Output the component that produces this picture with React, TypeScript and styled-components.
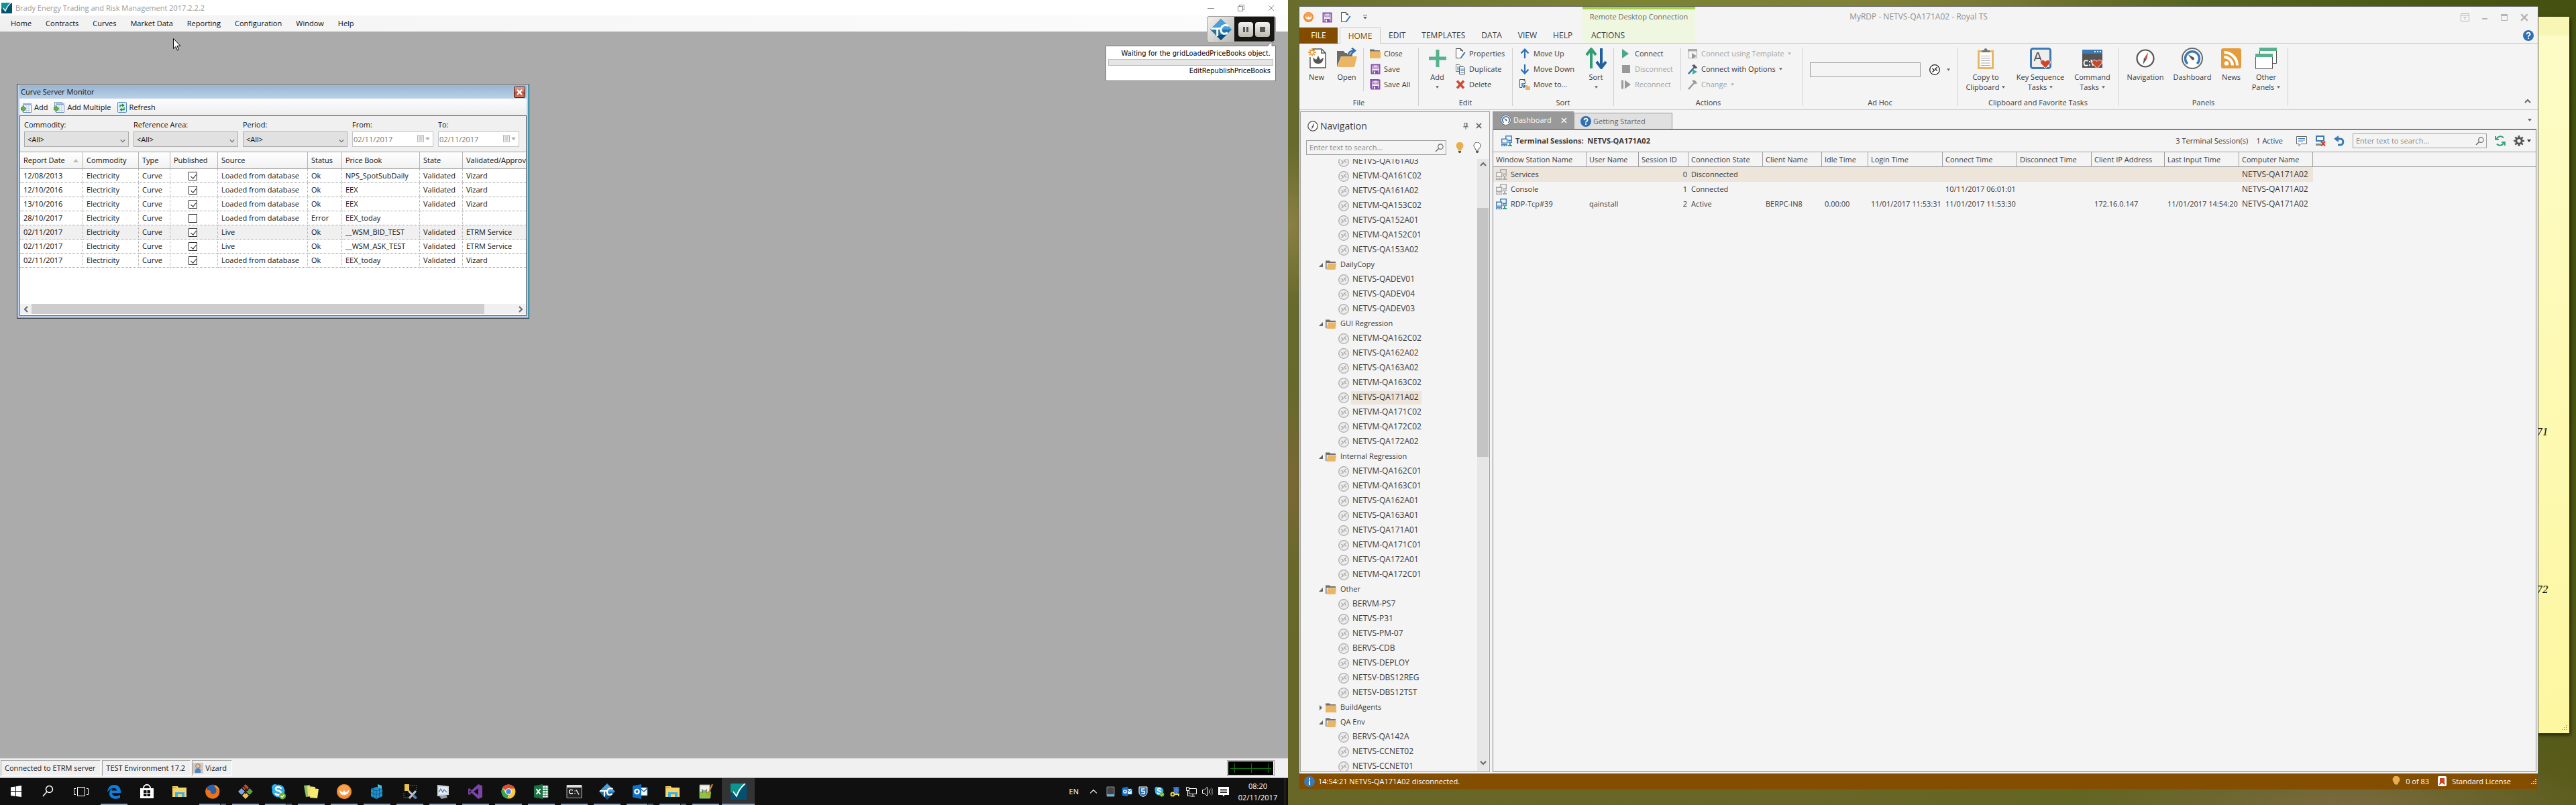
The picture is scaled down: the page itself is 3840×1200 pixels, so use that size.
import React from 'react';
import styled, { createGlobalStyle, css } from 'styled-components';

const UI = '"Open Sans", "Noto Sans", "Liberation Sans", sans-serif';

const Global = createGlobalStyle`
  * { box-sizing: border-box; }
  html, body { margin: 0; padding: 0; }
  body { font: 11px/16px ${UI}; color: #111; background: #101010; }
  button, input, select { font: inherit; color: inherit; margin: 0; }
  button { background: none; border: 0; padding: 0; white-space: nowrap; }
  svg { display: block; flex: none; }
  ul { list-style: none; margin: 0; padding: 0; }
`;

/* ------------------------------------------------------------------ */
/* Icons                                                               */
/* ------------------------------------------------------------------ */

const Svg = ({ s = 16, w, h, box, children }: any) => (
  <svg width={w || s} height={h || s} viewBox={box || `0 0 ${w || s} ${h || s}`} fill="none" aria-hidden="true">{children}</svg>
);

const BradyIcon = ({ s = 16 }: any) => (
  <Svg s={s} box="0 0 16 16">
    <rect width="16" height="16" rx="1" fill="#04506f" />
    <path d="M0 1a1 1 0 0 1 1-1h13C10.500 3.500 8 8 6.200 12.500L2 8 0 9z" fill="#0b9490" />
    <path d="M2.500 8l3.500 4.500C7.500 8 10.500 3.500 14.500 0" stroke="#fff" strokeWidth="1.300" />
  </Svg>
);
const RoyalIcon = ({ s = 15 }: any) => (
  <Svg s={s} box="0 0 16 16">
    <circle cx="8" cy="8" r="8" fill="#f08c2b" />
    <circle cx="8" cy="7" r="6.300" fill="#f6a050" />
    <path d="M3 6.500l3.300 2.500L8 6.500 9.700 9l3.800-3C13 10 11 11.500 8 11.500S3.500 10 3 6.500z" fill="#fff" />
  </Svg>
);
const SaveIcon = ({ all }: { all?: boolean }) => (
  <Svg>
    {all && <path d="M.5 13.500v-13h13" stroke="#8b4fae" />}
    <rect x="2.500" y="1.500" width="12" height="13" stroke="#8b4fae" strokeWidth="2" />
    <path d="M5 2h7v5H5z" fill="#fff" stroke="#8b4fae" />
    <path d="M4.500 10h8v5h-8z" fill="#8b4fae" />
    <path d="M6 11.500h2v3H6z" fill="#fff" />
    <path d="M6 4h5M6 5.500h5" stroke="#999" strokeWidth=".7" />
  </Svg>
);
const EditDocIcon = () => (
  <Svg>
    <path d="M11.500 5.500v-2l-3-3h-7v14h8" stroke="#4a4a4a" fill="#fff" />
    <path d="M8.500.5v3h3" stroke="#4a4a4a" />
    <path d="M14 5.500L8.500 13l-1 2.500L10 14l5.500-7.500z" fill="#2f6fb3" />
  </Svg>
);
const NewIcon = () => (
  <Svg w={28} h={32}>
    <path d="M8 6V2h13l6 6v22H4V14" stroke="#555" strokeWidth="1.500" fill="#fff" />
    <path d="M21 2v6h6" stroke="#555" strokeWidth="1.500" />
    <path d="M8 15l5 3 3-6 3 6 5-3c-1 6-3 9-8 9s-7-3-8-9z" fill="#555" />
    <path d="M7 1v12M1 7h12M3 3l8 8M11 3l-8 8" stroke="#e39b3b" strokeWidth="1.800" />
    <circle cx="7" cy="7" r="2.500" fill="#fff" stroke="#e39b3b" />
  </Svg>
);
const OpenBigIcon = () => (
  <Svg w={32} h={32}>
    <path d="M1 29V5h10l2 3h11v5H7z" fill="#6b6b6b" />
    <path d="M7 13h24l-4 16H2z" fill="#eab665" />
    <path d="M18 10c1-4 3-6 8-6" stroke="#f4f4f4" strokeWidth="5" />
    <path d="M18 10c1-4 4-5.500 9-5.500M23 .5l5 4-5 4" stroke="#2f6fb3" strokeWidth="2.500" />
  </Svg>
);
const FolderIcon = ({ open }: { open?: boolean }) => (
  <Svg>
    <path d="M0 15V1.500h6L7.500 3H15v2H0z" fill="#6f6f6f" />
    {open
      ? <><path d="M1 5h14v2H1z" fill="#f4f4f4" /><path d="M0 2h1.500v12H0z" fill="#6f6f6f" /><path d="M3.500 5.500H16L14.500 15H1.500z" fill="#eab665" /></>
      : <path d="M0 4.500h16V15H0z" fill="#eab665" />}
  </Svg>
);
const PlusBig = () => <Svg w={28} h={28}><path d="M14 1v26M1 14h26" stroke="#57b18b" strokeWidth="5" /></Svg>;
const DuplicateIcon = () => (
  <Svg>
    <path d="M1.500 1.500h5l2 2v8h-7z" fill="#fff" stroke="#777" />
    <path d="M3 5h3M3 7h3M3 9h3" stroke="#4a7fb5" />
    <path d="M6.500 4.500h6l2 2v9h-8z" fill="#fff" stroke="#555" />
    <path d="M8 8h5M8 10.500h5M8 13h5" stroke="#2f6fb3" />
  </Svg>
);
const DeleteIcon = () => <Svg><path d="M3 2.500l10 11M13 2.500L3 13.500" stroke="#d24a33" strokeWidth="3.500" /></Svg>;
const ArrowV = ({ down }: { down?: boolean }) => (
  <Svg><path d={down ? 'M8 1v12M2.500 8.500L8 14.500l5.500-6' : 'M8 15V3M2.500 7.500L8 1.500l5.500 6'} stroke="#2f6fb3" strokeWidth="2.200" /></Svg>
);
const MoveToIcon = () => (
  <Svg>
    <path d="M8 3.500v-3H.5v12H4M5.500.5l3 3v3h-3" stroke="#555" />
    <path d="M4 6v4.500h4M6 8l2.500 2.500L6 13" stroke="#2f6fb3" strokeWidth="1.500" />
    <path d="M9 9h3l1 1.500h3V16H9z" fill="#eab665" />
  </Svg>
);
const SortBig = () => (
  <Svg w={32} h={32}>
    <path d="M9 31V4M2 11l7-9 7 9" stroke="#2f9e72" strokeWidth="4" />
    <path d="M24 1v27M17 21l7 9 7-9" stroke="#225f9f" strokeWidth="4" />
  </Svg>
);
const PlayIcon = () => <Svg><path d="M2 1l10 7-10 7z" fill="#4aa884" /></Svg>;
const StopIcon = () => <Svg><path d="M2 2h12v12H2z" fill="#999" /></Svg>;
const ReconnectIcon = () => <Svg><path d="M1 1.500h3v13H1zM6 1.500L15 8l-9 6.500z" fill="#999" /></Svg>;
const TemplateIcon = () => (
  <Svg><path d="M14.500 14.500H1.500v-13h13z" stroke="#aaa" /><path d="M1 1h14v3.500H1z" fill="#aaa" /><path d="M7 7l7 4.500L7 16z" fill="#999" /></Svg>
);
const HammerIcon = ({ on }: { on?: boolean }) => (
  <Svg>
    <path d="M2 15L11 5" stroke={on ? '#2f6fb3' : '#999'} strokeWidth="2.500" />
    <path d="M7 2.500L10.500 1 15 5.500l-2 2-3-2.500z" fill={on ? '#555' : '#999'} />
    {on && <path d="M8 8l7 4-7 4z" fill="#4aa884" />}
  </Svg>
);
const RdpIcon = ({ c = '#aaa', f = 'none' }: any) => (
  <Svg>
    <circle cx="8" cy="8" r="7.300" stroke={c} strokeWidth="1.300" fill={f} />
    <path d="M4.500 6l3 2.700-3 2.700M11.800 4.200l-3 2.600 3 2.700" stroke={c} strokeWidth="1.400" />
  </Svg>
);
const ClipIcon = () => (
  <Svg w={24} h={32}>
    <path d="M1.500 5.500h21v25h-21z" fill="#fff" stroke="#eab665" strokeWidth="3" />
    <path d="M6 7V4h3.500c0-4 5-4 5 0H18v3z" fill="#777" />
    <path d="M5 12.500h14M5 16h14M5 19.500h14M5 23h14M5 26.500h14" stroke="#aaa" />
  </Svg>
);
const heart = 'M23 31l-7-7.500c-2-5 4-7 7-3 3-4 9-2 7 3z';
const KeySeqIcon = () => (
  <Svg w={32} h={32}>
    <rect x="1.500" y="1.500" width="29" height="29" rx="3" fill="#eee" stroke="#3b79b7" strokeWidth="3" />
    <path d="M6.500 20l4.500-12h1.500L17 20M8 16h7.500" stroke="#555" strokeWidth="1.800" />
    <path d={heart} fill="#cf4528" stroke="#fff" />
  </Svg>
);
const CmdTaskIcon = () => (
  <Svg w={30} h={30}>
    <path d="M0 2h30v27H0z" fill="#555" /><path d="M0 2h30v6H0z" fill="#3b79b7" />
    <path d="M18 4h2v2h-2zM22 4h2v2h-2zM26 4h2v2h-2z" fill="#fff" />
    <path d="M8.500 19c-4-2-6 0-6 3s2 5 6 3M11 19v2M11 24v2M13 17l3 9" stroke="#fff" strokeWidth="1.800" />
    <path d={heart} fill="#cf4528" stroke="#fff" transform="translate(-1 -1)" />
  </Svg>
);
const CompassIcon = ({ s = 28 }: any) => (
  <Svg s={s} box="0 0 28 28">
    <circle cx="14" cy="14" r="12.500" stroke="#555" strokeWidth="2.200" fill="#fff" />
    <path d="M18 5l-1.500 10-4-1.500z" fill="#d24a33" /><path d="M10.500 23l1.500-9.500 4 1.500z" fill="#555" />
  </Svg>
);
const GaugeIcon = ({ s = 32 }: any) => (
  <Svg s={s} box="0 0 32 32">
    <circle cx="16" cy="16" r="15" stroke="#666" strokeWidth="2" fill="#fff" />
    <path d="M9 24a10.500 10.500 0 1 1 14 0" stroke="#3b79b7" strokeWidth="3.500" />
    <path d="M9.500 10L18 14.500a2.200 2.200 0 1 1-3 3z" fill="#555" />
  </Svg>
);
const NewsIcon = () => (
  <Svg w={30} h={30}>
    <rect width="30" height="30" rx="3" fill="#e39b3b" />
    <circle cx="8" cy="22.500" r="3.200" fill="#fff" />
    <path d="M4.500 13A12.500 12.500 0 0 1 17 25.500M4.500 6A19.500 19.500 0 0 1 24 25.500" stroke="#fff" strokeWidth="4" />
  </Svg>
);
const PanelsIcon = () => (
  <Svg w={32} h={32}>
    <path d="M6.500.5h25v23h-25z" fill="#fff" stroke="#555" /><path d="M6 0h26v5H6z" fill="#57b18b" />
    <path d="M.5 9.500h25v22H.5z" fill="#fff" stroke="#555" /><path d="M0 9h26v5H0z" fill="#57b18b" />
  </Svg>
);
const Caret = ({ c = '#666', s = 5 }: any) => <Svg w={s} h={4} box="0 0 6 4"><path d="M0 0h6L3 4z" fill={c} /></Svg>;
const QuickCaret = () => <Svg w={6} h={7}><path d="M0 .5h6" stroke="#666" /><path d="M0 3h6L3 6.500z" fill="#666" /></Svg>;
const HelpIcon = ({ s = 16 }: any) => (
  <Svg s={s} box="0 0 16 16">
    <circle cx="8" cy="8" r="8" fill="#2f6fb3" />
    <path d="M5.500 6.200c0-3.600 5.200-3.300 5 0 0 1.600-2.500 1.700-2.500 3.600M8 11v2" stroke="#fff" strokeWidth="1.900" />
  </Svg>
);
const InfoIcon = () => (
  <Svg><circle cx="8" cy="8" r="8" fill="#3b79b7" /><path d="M8 3v2.200M8 6.500V13" stroke="#fff" strokeWidth="2" /></Svg>
);
const MagIcon = ({ s = 13, c = '#666' }: any) => (
  <Svg s={s} box="0 0 14 14"><circle cx="9" cy="5" r="4" stroke={c} strokeWidth="1.200" /><path d="M6 8l-5 5" stroke={c} strokeWidth="1.500" /></Svg>
);
const BulbIcon = ({ lit }: { lit?: boolean }) => (
  <Svg w={12} h={16}>
    <path d="M4 12c0-3-3-3.500-3-7a5 5 0 0 1 10 0c0 3.500-3 4-3 7z" fill={lit ? '#eaae50' : '#fff'} stroke={lit ? '#eaae50' : '#555'} />
    <path d="M4 13h4v1.500L7 16H5l-1-1.500z" fill="#555" />
  </Svg>
);
const TermIcon = ({ on }: { on?: boolean }) => {
  const c = on ? '#3f80c0' : '#aaa';
  return (
    <Svg>
      <path d="M6.700 5V.7h8.600v6.600H10" stroke={c} strokeWidth="1.400" />
      <path d="M.7 5.200h8v6h-8z" stroke={c} strokeWidth="1.400" fill="#f4f4f4" />
      <path d="M0 13h9v3H0zM10.500 8.500H16V11h-5.500z" fill={c} />
      <path d="M1.500 14.500H4M5.500 14.500h2M12 9.700h2.500" stroke="#f4f4f4" />
      <path d="M13 11v3M10 15h6" stroke={on ? '#3f9c78' : '#aaa'} strokeWidth="2" />
    </Svg>
  );
};
const NoteIcon = () => (
  <Svg><path d="M.5 1.500h15v11H7l-3 3v-3H.5z" stroke="#666" fill="#fff" /><path d="M3 4.500h10M3 7h10M3 9.500h7" stroke="#3b79b7" /></Svg>
);
const KillIcon = () => (
  <Svg>
    <path d="M2 1h11v7H2z" stroke="#3b79b7" strokeWidth="2" /><path d="M1 12h8v3H1z" fill="#888" />
    <path d="M9 9l6 6.500M15 9l-6 6.500" stroke="#cf3a22" strokeWidth="2.200" />
  </Svg>
);
const UndoIcon = () => <Svg><path d="M2 5h8c5 0 5 9 0 9H6" stroke="#3b79b7" strokeWidth="3" /><path d="M7 0v10L0 5z" fill="#3b79b7" /></Svg>;
const RefreshIcon = () => (
  <Svg>
    <path d="M2.500 6a6 6 0 0 1 10.500-2.500M13.500 10a6 6 0 0 1-10.500 2.500" stroke="#3aa57a" strokeWidth="2.200" />
    <path d="M0 1h2v4h4v2H0zM16 15h-2v-4h-4V9h6z" fill="#3aa57a" />
  </Svg>
);
const GearIcon = () => (
  <Svg>
    <circle cx="8" cy="8" r="4.200" stroke="#555" strokeWidth="3" />
    <path d="M8 0v3M8 13v3M0 8h3M13 8h3M2.300 2.300l2.200 2.200M11.500 11.500l2.200 2.200M2.300 13.700l2.200-2.200M11.500 4.500l2.200-2.200" stroke="#555" strokeWidth="2.600" />
  </Svg>
);
const Chevron = ({ d = 'up', c = '#666', s = 10, sw = 2 }: any) => {
  const r = { up: 0, right: 90, down: 180, left: 270 }[d as string];
  return <Svg s={s} box="0 0 10 10"><path d="M1 7l4-4 4 4" stroke={c} strokeWidth={sw} transform={`rotate(${r} 5 5)`} /></Svg>;
};
const XIcon = ({ c = '#777', s = 10, sw = 1 }: any) => <Svg s={s} box="0 0 10 10"><path d="M1 1l8 8M9 1L1 9" stroke={c} strokeWidth={sw} /></Svg>;
const PinIcon = () => <Svg w={8} h={10}><path d="M2 .5h4v5H2zM0 6h8M4 6v4M5 1v5" stroke="#666" /></Svg>;
const GridIcon = ({ many }: { many?: boolean }) => (
  <Svg>
    {many && <path d="M1.500 8V.5h12" stroke="#7a9cc6" />}
    <path d="M3.500 2.500h12v13h-12z" fill="#fff" stroke="#5b86c0" />
    <path d="M3 2h13v3H3z" fill="#8fb2dd" />
    <path d="M5 7.500h9M5 10h9M5 12.500h9M8 5v10M12 5v10" stroke="#b7cbe5" />
    <path d="M0 8h3V5l5 5-5 5v-3H0z" fill="#6ab04a" stroke="#3a7a28" strokeWidth=".7" />
  </Svg>
);
const ReloadDoc = () => (
  <Svg w={14} h={16}>
    <rect x=".5" y=".5" width="13" height="15" rx="1" fill="#dfeefc" stroke="#4a86c4" />
    <path d="M4 8V5h5M7 3l2.500 2L7 7M10 8v3.500H5M7 9.500L4.500 11.500 7 13.500" stroke="#1f8a2e" strokeWidth="1.400" />
  </Svg>
);
const CalIcon = () => (
  <Svg w={20} h={14}>
    <path d="M1.500 1.500h9v10h-9z" fill="#f2f2f2" stroke="#b8b8b8" /><path d="M3 4h6M3 6h6M3 8h6M5 3v7M7 3v7" stroke="#c9c9c9" />
    <path d="M13 5h7l-3.500 4z" fill="#aaa" />
  </Svg>
);
const UserIcon = () => (
  <Svg><path d="M0 0h16v16H0z" fill="#ccc8c8" /><path d="M4 15c-1-5 1-7 4-7s5 2 4 7z" fill="#4a86c4" /><circle cx="8" cy="5" r="3.300" fill="#e5c09a" stroke="#9a7a55" /></Svg>
);

/* task bar drawings, all on a 24 px square */
const T = ({ children, s = 24 }: any) => <Svg s={s} box="0 0 24 24">{children}</Svg>;
const winLogo = <T><path d="M4 5.500l7-1V11H4zM12 4.300l8-1.200V11h-8zM4 12h7v7l-7-1zM12 12h8v8l-8-1.100z" fill="#fff" /></T>;
const search = <T><circle cx="13.500" cy="8.500" r="5" stroke="#fff" strokeWidth="1.500" /><path d="M10 12l-6 7" stroke="#fff" strokeWidth="1.500" /></T>;
const taskView = <T><path d="M6.500 5.500h11v13h-11zM4 7.500H1.500v9H4M20 7.500h2.500v9H20" stroke="#fff" /></T>;
const edge = <T><path d="M2 13C3 5 7 2 12.500 2 19 2 22 7 22 12v2H9c0 5 7 6 12 3v4c-6 3.500-16 2-16-6 0-4 2-6 5-7.500C9 9 9 10 9 10.500h7C16 5 7 5 2 13z" fill="#0f7fdb" /></T>;
const store = <T><path d="M2 7h20v15H2z" fill="#fff" /><path d="M7 7c0-7 10-7 10 0" stroke="#fff" strokeWidth="1.800" /><path d="M7 10h4.500v4H7zM12.500 10H17v4h-4.500zM7 15h4.500v4H7zM12.500 15H17v4h-4.500z" fill="#101010" /></T>;
const explorer = <T><path d="M1 4h8l1 2h12v14H1z" fill="#f7d568" /><path d="M2 5h5v2H2z" fill="#e0a93a" /><path d="M5 20v-7h14v7h-4v-4H9v4z" fill="#3bb1e3" /></T>;
const firefox = <T><circle cx="12" cy="12" r="10.500" fill="#2a5fb0" /><path d="M3 5c0 3 0 4 2 5 4 0 5 2 4 4 2 3 7 2 8-1 2-5-2-7-3-10 6 1 9 6 8 11-1 6-6 9-11 8.500C4 22 0 16 1.500 9z" fill="#ee7216" /><path d="M14 2c6 2 8 6 8 10-1-4-4-6-8-10z" fill="#fbc02d" /></T>;
const git = <T><path d="M12 1l5 5-5 5-5-5z" fill="#e0442c" /><path d="M6 7l5 5-5 5-5-5z" fill="#7aa7f0" /><path d="M18 7l5 5-5 5-5-5z" fill="#57a639" /><path d="M12 13l5 5-5 5-5-5z" fill="#f2c14a" /><path d="M8 3l8 8M12 8v8" stroke="#222" strokeWidth="1.500" /></T>;
const skype = (s = 24) => <T s={s}><circle cx="12" cy="11" r="9.500" fill="#2cb0ee" /><circle cx="7" cy="6" r="5" fill="#2cb0ee" /><path d="M16 8c-1-4-8-3.500-8 0 0 3.500 8 2 8 6 0 4-8 4-8.500 0" stroke="#fff" strokeWidth="2.500" /><circle cx="18" cy="18.500" r="5" fill="#6cb52d" /><path d="M15.500 18.500l2 2 3-3.500" stroke="#fff" strokeWidth="1.300" /></T>;
const notes = <T><path d="M1 3l9-1 2 17-8 1z" fill="#8fbf62" /><path d="M6 4l12 1-1 15-10-1z" fill="#e9e27a" /><path d="M11 7l12 1-2 14-11-1z" fill="#f6ea6a" /></T>;
const regedit = <T><path d="M3 8l8-3 9 3v11l-9 4-8-4z" fill="#2493c9" /><path d="M3 8l8 3 9-3M11 11v12M3 13.500l8 3 9-3M7 6.500v14M15.500 6.500v14" stroke="#0c5d92" /><path d="M13 1l6 2v5l-6-2z" fill="#4bb6e6" /></T>;
const tools = <T><path d="M4 1h7v10H4z" fill="#e8c44a" /><path d="M12 3h10v7M3 14v7h8" stroke="#3e8a3e" strokeDasharray="2 1" /><path d="M10 11l11 11M21 11L11 22" stroke="#b9c4cf" strokeWidth="3" /><path d="M17 17l5 5" stroke="#4a7bbf" strokeWidth="3" /></T>;
const monitor = <T><path d="M4 2l17 2v13l-17 2z" fill="#d5d9dd" /><path d="M6 5l13 1v9L6 16z" fill="#e8f1fa" /><path d="M6 13l3-5 3 5 2-4 4 4" stroke="#3b79b7" strokeWidth="1.300" /><path d="M7 19l10-2 2 4-9 2z" fill="#9aa0a6" /></T>;
const vs = <T><path d="M16 1l6 2.500v17L16 23 6 14l-3.500 3L1 16V8l1.500-1L6 10zM3 9.500v5L5.500 12zM9 12l7 5V7z" fill="#7b45a8" fillRule="evenodd" /></T>;
const chrome = <T><circle cx="12" cy="12" r="10.500" fill="#f7cb3c" /><path d="M12 12L2.900 6.700A10.500 10.500 0 0 1 21.400 7.500H12z" fill="#e04a3a" /><path d="M2.900 6.700L8 15l4 2-2 5.300A10.500 10.500 0 0 1 2.900 6.700z" fill="#34a352" /><circle cx="12" cy="12" r="4.800" fill="#fff" /><circle cx="12" cy="12" r="3.700" fill="#4285f4" /></T>;
const excel = <T><path d="M13 3h9v18h-9z" fill="#fff" stroke="#1f7246" /><path d="M14 7h7M14 10.500h7M14 14h7M14 17.500h7M17.500 4v16" stroke="#1f7246" /><path d="M1 3.500L14 1v22L1 20.500z" fill="#1f7246" /><path d="M4.500 8l6 8M10.500 8l-6 8" stroke="#fff" strokeWidth="2" /></T>;
const cmd = <T><path d="M1 2.500h22v19H1z" fill="#222" stroke="#aaa" /><path d="M1 2h22v4H1z" fill="#ddd" /><path d="M10 10c-4-1.500-5.500 0-5.500 2s1.500 4 5.500 2.500M13 10.500v1M13 14v1M15 9.500l4 7" stroke="#fff" strokeWidth="1.400" /></T>;
const tcMark = (
  <>
    <path d="M12 0l12 12-12 12L0 12z" fill="#1f74ae" />
    <path d="M12 0l12 12H0z" fill="#4a9fd6" />
    <path d="M12 24l6-6H6z" fill="#0f4a7a" />
    <path d="M1 11h12M8 11v8.500" stroke="#fff" strokeWidth="2.200" />
    <path d="M20.500 8c-5-2.500-8.500.5-8.500 4.500s3.500 5.500 7.500 3" stroke="#fff" strokeWidth="2.200" />
  </>
);
const tc = <T>{tcMark}</T>;
const outlook = (s = 24) => <T s={s}><path d="M12 6h11v12H12z" fill="#fff" stroke="#1272c8" /><path d="M13 8l5 4 5-5" stroke="#1272c8" strokeWidth="1.600" /><path d="M1 3.500L14 1v22L1 20.500z" fill="#1272c8" /><circle cx="7.500" cy="12" r="3.200" stroke="#fff" strokeWidth="2.200" /></T>;
const npp = <T><path d="M3 2h15v20H3z" fill="#eef3ea" stroke="#999" /><path d="M3 12h17l-1 10H3z" fill="#8ac63f" /><path d="M7 8v6M13 8v6M7 11h6" stroke="#444" /><path d="M22 1l-7 16" stroke="#d4862b" strokeWidth="2" /></T>;
const brady = <BradyIcon s={24} />;

/* ------------------------------------------------------------------ */
/* Desktop halves                                                      */
/* ------------------------------------------------------------------ */

const Desk = styled.div`
  display: grid;
  grid-template-columns: 1fr 1fr;
  height: 100vh;
  overflow: hidden;
`;
const Monitor = styled.section`
  position: relative;
  display: flex;
  flex-direction: column;
  min-width: 0;
  background: #ababab;
`;
const TitleBar = styled.header`
  display: flex;
  align-items: center;
  height: 23px;
  padding: 0 20px 0 2px;
  gap: 5px;
  background: #fff;
  color: #999;
`;
const Controls = styled.div<{ $gap: number }>`
  display: flex;
  align-items: center;
  gap: ${p => p.$gap}px;
  margin-left: auto;
`;
const MenuBar = styled.nav`
  display: flex;
  height: 24px;
  padding-left: 6px;
  background: linear-gradient(90deg, #f0f0f0, #f5f5f5 20%, #fcfcfc);
  button { padding: 0 11px 0 10px; }
`;
const Mdi = styled.main`
  position: relative;
  flex: 1;
`;
const CurveWindow = styled.section`
  position: absolute;
  left: 25px;
  top: 78px;
  width: 764px;
  height: 350px;
  display: flex;
  flex-direction: column;
  padding: 1px 3px 3px;
  border: 1px solid #333;
  background: #b9d1ea;
  box-shadow: inset 0 1px #fff, inset -1px -1px #45c8e8;
`;
const CurveTitle = styled.div`
  display: flex;
  align-items: center;
  justify-content: space-between;
  height: 20px;
  padding: 0 2px;
  background: linear-gradient(#99b4d1, #b9d1ea);
`;
const RedClose = styled.button`
  display: grid;
  place-items: center;
  width: 17px;
  height: 17px;
  border: 1px solid #43201c;
  border-radius: 2px;
  background: linear-gradient(#e2a397, #c9604c 50%, #b5412c 51%, #cf7b5f);
`;
const CurveTools = styled.div`
  display: flex;
  align-items: center;
  gap: 9px;
  height: 25px;
  padding: 0 2px;
  background: linear-gradient(#fdfdfd, #ededed);
  button { display: flex; align-items: center; gap: 4px; }
`;
const CurveBody = styled.div`
  flex: 1;
  display: flex;
  flex-direction: column;
  min-height: 0;
  border: 1px solid #646464;
  background: #fff;
`;
const Filters = styled.form`
  display: flex;
  gap: 7px;
  height: 54px;
  padding: 5px 6px 0;
  background: #f0f0f0;
  border-bottom: 1px solid #a0a0a0;
`;
const Field = styled.div<{ $w: number }>`
  position: relative;
  width: ${p => p.$w}px;
  label { display: block; margin-bottom: 2px; }
  select, input {
    appearance: none;
    display: block;
    width: 100%;
    height: 23px;
    padding: 0 4px;
    border: 1px solid #adadad;
    border-radius: 0;
    background: #e1e1e1;
  }
  input { background: #fff; border-color: #c4c4c4; color: #777; padding: 0 1px; }
`;
const FieldMark = styled.span`
  position: absolute;
  right: 5px;
  bottom: 12px;
`;
const CurveGridWrap = styled.div`
  flex: 1;
  overflow: hidden;
`;
const CurveGrid = styled.table`
  table-layout: fixed;
  width: 100%;
  border-collapse: separate;
  border-spacing: 0;
  th, td { padding: 0 0 0 5px; text-align: left; font-weight: 400; white-space: nowrap; overflow: hidden; }
  th { height: 25px; border-right: 1px solid #b5b5b5; border-bottom: 1px solid #a0a0a0; background: linear-gradient(#fff, #f1f1f1); }
  td { height: 21px; border-right: 1px dotted #aaa; border-bottom: 1px dotted #999; }
  th:last-child, td:last-child { border-right: 0; }
`;
const CurveRow = styled.tr<{ $on?: boolean }>`
  background: ${p => (p.$on ? '#f0f0f0' : '#fff')};
`;
const SortHead = styled.span`
  display: flex;
  align-items: center;
  justify-content: space-between;
  padding-right: 6px;
`;
const Tick = styled.input`
  appearance: none;
  position: relative;
  display: block;
  width: 13px;
  height: 13px;
  margin: 0 0 0 22px;
  border: 1px solid #333;
  background: #fff;
  &:checked::after {
    content: '';
    position: absolute;
    left: 4px;
    top: 1px;
    width: 4px;
    height: 7px;
    border: solid #222;
    border-width: 0 1px 1px 0;
    transform: rotate(40deg);
  }
`;
const HScroll = styled.div`
  display: grid;
  grid-template-columns: 17px 675px 1fr 17px;
  align-items: center;
  justify-items: center;
  height: 15px;
  margin-bottom: 2px;
  background: #f0f0f0;
`;
const Thumb = styled.span`
  align-self: stretch;
  justify-self: stretch;
  background: #cdcdcd;
`;

const AppStatus = styled.footer`
  display: flex;
  align-items: center;
  gap: 2px;
  height: 30px;
  padding: 0 20px 0 1px;
  background: #f0f0f0;
  border-top: 1px solid #d4d4d4;
  border-bottom: 1px solid #a0a0a0;
`;
const StatusCell = styled.span`
  display: flex;
  align-items: center;
  gap: 3px;
  height: 24px;
  padding: 0 7px 0 5px;
  border: 1px solid;
  border-color: #a0a0a0 #fff #fff #a0a0a0;
  &:nth-child(3) { padding-left: 0; }
`;
const Scope = styled.span`
  margin-left: auto;
  padding: 1px;
  border: 1px solid #a0a0a0;
  background: #fff;
`;

const TaskBar = styled.footer`
  display: flex;
  height: 40px;
  background: #101010;
  color: #fff;
`;
const TaskButton = styled.button<{ $w?: number; $run?: boolean; $split?: boolean; $active?: boolean }>`
  position: relative;
  display: grid;
  place-items: center;
  width: ${p => p.$w || 49}px;
  ${p => p.$active && css`background: #333;`}
  ${p => p.$run && css`
    &::after {
      content: '';
      position: absolute;
      bottom: 0;
      left: ${p.$active ? 0 : 5}px;
      right: ${p.$active ? 0 : 4}px;
      height: 2px;
      background: ${p.$split ? 'linear-gradient(90deg, #8fa3c4 31px, #101010 31px, #101010 32px, #5c6778 32px)' : '#8fa3c4'};
    }
  `}
`;
const Tray = styled.div`
  display: flex;
  align-items: center;
  gap: 8px;
  margin-left: auto;
  padding-right: 4px;
`;
const TrayText = styled.span`margin-right: 8px;`;
const TrayMore = styled.button`margin-right: 4px;`;
const Clock = styled.time`
  width: 64px;
  margin-left: 3px;
  text-align: center;
  line-height: 17px;
`;
const PeekLine = styled.span`
  align-self: stretch;
  width: 1px;
  background: #444;
`;

const Recorder = styled.aside`
  position: absolute;
  top: 24px;
  right: 18px;
  display: flex;
  flex-direction: column;
  align-items: flex-end;
  gap: 4px;
  color: #000;
`;
const RecBox = styled.div`
  display: flex;
  width: 103px;
  height: 40px;
  overflow: hidden;
  border: 1px solid #a39f98;
  border-radius: 4px;
  background: #161616;
  box-shadow: inset -1px -1px #fff;
`;
const RecLogo = styled.span`
  display: grid;
  place-items: center;
  width: 40px;
  background: linear-gradient(135deg, #f1f1ef, #b9b7b2);
`;
const RecButtons = styled.span`
  display: flex;
  align-items: center;
  gap: 3px;
  padding-left: 6px;
  button {
    display: grid;
    place-items: center;
    width: 22px;
    height: 22px;
    border-radius: 4px;
    background: linear-gradient(#f4f3ef, #bdb9ad);
  }
`;
const RecTip = styled.div`
  position: relative;
  width: 254px;
  padding: 3px 3px 6px;
  border: 1px solid #777;
  background: #fff;
  font: 11px/16px "DejaVu Sans Condensed", "Open Sans", sans-serif;
  text-align: right;
  p { margin: 0; padding-right: 4px; white-space: nowrap; }
`;
const TipTail = styled.span`
  position: absolute;
  top: -8px;
  right: 4px;
`;
const Progress = styled.div`
  height: 10px;
  border: 1px solid #bcbcbc;
  background: #e6e6e6;
`;
const Pointer = styled.span`
  position: absolute;
  left: 258px;
  top: 10px;
`;

/* ------------------------------------------------------------------ */
/* Right monitor                                                       */
/* ------------------------------------------------------------------ */

const Wallpaper = styled.section`
  position: relative;
  min-width: 0;
  overflow: hidden;
  background:
    radial-gradient(600px 200px at 28% 0, #7c8434 0, transparent 100%),
    radial-gradient(500px 100px at 45% 0, #84803a 0, transparent 100%),
    radial-gradient(400px 80px at 82% 100%, #7a6a3e 0, transparent 100%),
    radial-gradient(80px 120px at 0 28%, #8a8044 0, transparent 100%),
    radial-gradient(80px 140px at 0 60%, #7a6836 0, transparent 100%),
    linear-gradient(180deg, transparent 40%, rgba(104, 100, 34, .6)),
    linear-gradient(90deg, #666a2c, #6a6a2e 40%, #55651f 70%, #44500f);
`;
const Sticky = styled.aside`
  position: absolute;
  top: 25px;
  right: 10px;
  bottom: 107px;
  width: 260px;
  background: linear-gradient(#f8f5b5 28px, #fdfcc6 28px, #fdf7a0);
  box-shadow: 2px 3px 5px rgba(0, 0, 0, .6);
  text-align: right;
  color: #000;
  font: italic 14px/20px "DejaVu Serif", serif;
  padding: 609px 31px 0 0;
  p { margin: 0 0 215px; }
`;
const NoteGrip = styled.span`
  position: absolute;
  right: 3px;
  bottom: 3px;
`;
const RoyalWindow = styled.section`
  position: absolute;
  inset: 9px 56px 23px 16px;
  display: flex;
  flex-direction: column;
  border: 1px solid #5c5c5c;
  background: #f4f4f4;
  color: #3a3a3a;
`;
const Head = styled.header`
  display: grid;
  grid-template-columns: 422px 168px 1fr;
  grid-template-rows: 31px 23px;
  border-bottom: 1px solid #c9c9c9;
`;
const Quick = styled.div`
  grid-area: 1 / 1;
  display: flex;
  align-items: center;
  gap: 12px;
  padding-left: 6px;
  svg:last-child { margin-left: 6px; }
`;
const AppTitle = styled.h1`
  grid-area: 1 / 1 / 2 / 4;
  margin: 0;
  text-align: center;
  font-size: 12px;
  font-weight: 400;
  line-height: 30px;
  color: #8f8f8f;
`;
const Context = styled.div`
  grid-area: 1 / 2 / 3 / 3;
  display: flex;
  flex-direction: column;
  border-top: 4px solid #a6d348;
  background: #eff7e1;
  span { height: 27px; line-height: 22px; text-align: center; color: #6b6b6b; }
  button { flex: 1; padding-left: 13px; text-align: left; font-size: 12px; }
`;
const WinButtons = styled.div`
  grid-area: 1 / 3;
  justify-self: end;
  display: flex;
  align-items: center;
  gap: 18px;
  padding-right: 14px;
`;
const HelpSlot = styled.button`
  grid-area: 2 / 3;
  justify-self: end;
  padding-right: 6px;
`;
const Tabs = styled.nav`
  grid-area: 2 / 1;
  display: flex;
  font-size: 12px;
  margin-bottom: -1px;
`;
const Tab = styled.button<{ $kind?: 'file' | 'on' }>`
  flex: none;
  padding: 0 12px;
  ${p => p.$kind === 'file' && css`width: 57px; margin-right: 3px; background: #824b00; color: #fff;`}
  ${p => p.$kind === 'on' && css`width: 61px; border: 1px solid #c9c9c9; border-bottom: 0; background: #f4f4f4; color: #7f4a00; padding: 0;`}
`;
const Ribbon = styled.div`
  position: relative;
  display: flex;
  height: 99px;
  padding-top: 6px;
  border-bottom: 1px solid #c9c9c9;
`;
const Group = styled.div<{ $w: number; $pad?: number }>`
  width: ${p => p.$w}px;
  height: 87px;
  border-right: 1px solid #d0d0d0;
  > div { display: flex; height: 66px; padding-left: ${p => p.$pad || 0}px; }
  > p { margin: 8px 0 0; text-align: center; line-height: 16px; }
`;
const Big = styled.button<{ $w: number }>`
  display: flex;
  flex-direction: column;
  align-items: center;
  width: ${p => p.$w}px;
  line-height: 15px;
`;
const BigArt = styled.span`
  display: grid;
  place-items: center;
  height: 32px;
  margin-bottom: 4px;
`;
const Inline = styled.span`
  display: flex;
  align-items: center;
  gap: 4px;
  min-height: 15px;
`;
const SmallCol = styled.div<{ $w?: number }>`
  display: flex;
  flex-direction: column;
  gap: 5px;
  width: ${p => (p.$w ? `${p.$w}px` : 'auto')};
`;
const Small = styled.button<{ $off?: boolean }>`
  display: flex;
  align-items: center;
  gap: 5px;
  height: 18px;
  color: ${p => (p.$off ? '#a3a3a3' : 'inherit')};
`;
const Rule = styled.span<{ $m: string }>`
  width: 1px;
  height: 64px;
  margin: ${p => p.$m};
  background: #d0d0d0;
`;
const AdHoc = styled.div`
  align-items: center;
  input { width: 165px; height: 22px; margin-right: 13px; border: 1px solid #a0a0a0; background: #f4f4f4; }
  button { display: flex; align-items: center; gap: 10px; }
`;
const Collapse = styled.button`
  margin: auto 10px 7px auto;
`;

const Work = styled.div`
  flex: 1;
  display: flex;
  gap: 4px;
  min-height: 0;
  padding: 2px 2px 2px 1px;
`;
const NavPanel = styled.aside`
  display: flex;
  flex-direction: column;
  width: 283px;
  border: 1px solid #a0a0a0;
`;
const NavHead = styled.div`
  display: flex;
  align-items: center;
  height: 41px;
  padding: 0 11px 0 10px;
  gap: 3px;
  h2 { margin: 0; font-size: 14px; font-weight: 400; }
`;
const NavSearch = styled.div`
  display: flex;
  align-items: center;
  gap: 14px;
  height: 27px;
  padding: 0 0 3px 8px;
`;
const SearchBox = styled.label<{ $w: number }>`
  flex: none;
  display: flex;
  align-items: center;
  width: ${p => p.$w}px;
  height: 22px;
  padding: 0 3px 0 4px;
  border: 1px solid #a0a0a0;
  input { flex: 1; min-width: 0; padding: 0; border: 0; outline: 0; background: none; }
  input::placeholder { color: #8c8c8c; opacity: 1; }
`;
const NavBody = styled.div`
  flex: 1;
  display: flex;
  min-height: 0;
  padding: 2px 1px 1px 0;
`;
const Tree = styled.ul`
  flex: 1;
  overflow: hidden;
  li:first-child { margin-top: -7px; }
`;
const Node = styled.li<{ $leaf?: boolean }>`
  display: flex;
  align-items: center;
  height: 22px;
  padding-left: ${p => (p.$leaf ? 56 : 26)}px;
  gap: ${p => (p.$leaf ? 3 : 4)}px;
  font-size: ${p => (p.$leaf ? 12 : 11)}px;
`;
const NodeText = styled.span<{ $on?: boolean }>`
  height: 20px;
  padding: 0 4px 0 2px;
  line-height: 18px;
  background: ${p => (p.$on ? '#ede4da' : 'none')};
`;
const VScroll = styled.div`
  display: grid;
  grid-template-rows: 73px 371px 1fr 17px;
  justify-items: center;
  width: 17px;
  background: #e6e6e6;
  > svg:first-child { margin-top: 3px; }
`;
const VThumb = styled.span`
  width: 100%;
  background: #c4c4c4;
`;

const Docs = styled.main`
  flex: 1;
  display: flex;
  flex-direction: column;
  min-width: 0;
`;
const DocTabs = styled.div`
  display: flex;
  align-items: flex-end;
  height: 26px;
`;
const DocTab = styled.button<{ $on?: boolean }>`
  display: flex;
  align-items: center;
  gap: 3px;
  width: ${p => (p.$on ? 121 : 147)}px;
  height: ${p => (p.$on ? 26 : 24)}px;
  padding: 0 ${p => (p.$on ? 10 : 9)}px 0 ${p => (p.$on ? 12 : 9)}px;
  border: ${p => (p.$on ? '0' : '1px solid #999')};
  border-bottom: 0;
  background: ${p => (p.$on ? '#999' : '#e0e0e0')};
  color: ${p => (p.$on ? '#fff' : '#666')};
  > svg:nth-of-type(2) { margin-left: auto; }
`;
const DocCaret = styled.button`
  margin: auto 6px auto auto;
`;
const DocBody = styled.div`
  flex: 1;
  border: 1px solid #808080;
  border-top-width: 2px;
`;
const DocHead = styled.div`
  display: flex;
  align-items: center;
  height: 32px;
  padding: 0 7px 0 12px;
  gap: 12px;
  h3 { display: flex; align-items: center; gap: 5px; margin: 0 auto 0 0; font-size: 11px; font-weight: 700; }
`;
const ActiveCount = styled.span`
  margin-right: 8px;
`;
const Session = styled.table`
  table-layout: fixed;
  width: 100%;
  border-collapse: separate;
  border-spacing: 0;
  th, td { padding: 0 0 0 4px; text-align: left; font-weight: 400; white-space: nowrap; }
  th { height: 23px; border: solid #a0a0a0; border-width: 1px 1px 1px 0; }
  th:last-child { border-right: 0; }
  td { height: 22px; }
  td:nth-child(3) { padding-right: 2px; text-align: right; }
  td:nth-child(12) { font-size: 12px; }
`;
const SessionRow = styled.tr<{ $on?: boolean }>`
  td:not(:last-child) { background: ${p => (p.$on ? '#ede4da' : 'none')}; }
`;
const IconCell = styled.span`
  display: flex;
  align-items: center;
  gap: 6px;
`;
const RoyalStatus = styled.footer`
  display: flex;
  align-items: center;
  height: 23px;
  padding: 0 1px 0 7px;
  background: #844e00;
  color: #fff;
  gap: 5px;
`;
const StatusRight = styled.span`
  display: flex;
  align-items: center;
  gap: 8px;
  margin-left: auto;
  margin-right: 24px;
  svg:nth-of-type(2) { margin-left: 5px; }
`;

/* ------------------------------------------------------------------ */
/* Data                                                                */
/* ------------------------------------------------------------------ */

const curveCols: [string, number?][] = [['Report Date', 94], ['Commodity', 83], ['Type', 47], ['Published', 71], ['Source', 134], ['Status', 51], ['Price Book', 116], ['State', 64], ['Validated/Approv']];
const curveRows: [string, boolean, string, string, string, string, string][] = [
  ['12/08/2013', true, 'Loaded from database', 'Ok', 'NPS_SpotSubDaily', 'Validated', 'Vizard'],
  ['12/10/2016', true, 'Loaded from database', 'Ok', 'EEX', 'Validated', 'Vizard'],
  ['13/10/2016', true, 'Loaded from database', 'Ok', 'EEX', 'Validated', 'Vizard'],
  ['28/10/2017', false, 'Loaded from database', 'Error', 'EEX_today', '', ''],
  ['02/11/2017', true, 'Live', 'Ok', '__WSM_BID_TEST', 'Validated', 'ETRM Service'],
  ['02/11/2017', true, 'Live', 'Ok', '__WSM_ASK_TEST', 'Validated', 'ETRM Service'],
  ['02/11/2017', true, 'Loaded from database', 'Ok', 'EEX_today', 'Validated', 'Vizard'],
];

const tree: (string | { f: string; shut?: boolean })[] = [
  'NETVS-QA161A03', 'NETVM-QA161C02', 'NETVS-QA161A02', 'NETVM-QA153C02', 'NETVS-QA152A01', 'NETVM-QA152C01', 'NETVS-QA153A02',
  { f: 'DailyCopy' }, 'NETVS-QADEV01', 'NETVS-QADEV04', 'NETVS-QADEV03',
  { f: 'GUI Regression' }, 'NETVM-QA162C02', 'NETVS-QA162A02', 'NETVS-QA163A02', 'NETVM-QA163C02', 'NETVS-QA171A02', 'NETVM-QA171C02', 'NETVM-QA172C02', 'NETVS-QA172A02',
  { f: 'Internal Regression' }, 'NETVM-QA162C01', 'NETVM-QA163C01', 'NETVS-QA162A01', 'NETVS-QA163A01', 'NETVS-QA171A01', 'NETVM-QA171C01', 'NETVS-QA172A01', 'NETVM-QA172C01',
  { f: 'Other' }, 'BERVM-PS7', 'NETVS-P31', 'NETVS-PM-07', 'BERVS-CDB', 'NETVS-DEPLOY', 'NETSV-DBS12REG', 'NETSV-DBS12TST',
  { f: 'BuildAgents', shut: true }, { f: 'QA Env' }, 'BERVS-QA142A', 'NETVS-CCNET02', 'NETVS-CCNET01',
];

const sessionCols: [string, number][] = [['Window Station Name', 139], ['User Name', 78], ['Session ID', 74], ['Connection State', 111], ['Client Name', 88], ['Idle Time', 69], ['Login Time', 111], ['Connect Time', 111], ['Disconnect Time', 111], ['Client IP Address', 109], ['Last Input Time', 111], ['Computer Name', 110]];
const sessions = [
  ['Services', '', '0', 'Disconnected', '', '', '', '', '', '', '', 'NETVS-QA171A02'],
  ['Console', '', '1', 'Connected', '', '', '', '10/11/2017 06:01:01', '', '', '', 'NETVS-QA171A02'],
  ['RDP-Tcp#39', 'qainstall', '2', 'Active', 'BERPC-IN8', '0.00:00', '11/01/2017 11:53:31', '11/01/2017 11:53:30', '', '172.16.0.147', '11/01/2017 14:54:20', 'NETVS-QA171A02'],
];

type Task = { n: string; i: React.ReactNode; run?: boolean; split?: boolean; active?: boolean };
const tasks: Task[] = [
  { n: 'Edge', i: edge, run: true }, { n: 'Store', i: store }, { n: 'File Explorer', i: explorer },
  { n: 'Firefox', i: firefox, run: true, split: true }, { n: 'Git', i: git, run: true }, { n: 'Skype', i: skype(), run: true, split: true },
  { n: 'Sticky Notes', i: notes, run: true }, { n: 'Royal TS', i: <RoyalIcon s={22} />, run: true }, { n: 'Registry', i: regedit, run: true },
  { n: 'Database tools', i: tools, run: true }, { n: 'Performance', i: monitor, run: true }, { n: 'Visual Studio', i: vs, run: true },
  { n: 'Chrome', i: chrome, run: true }, { n: 'Excel', i: excel, run: true }, { n: 'Command Prompt', i: cmd, run: true },
  { n: 'TestComplete', i: tc, run: true }, { n: 'Outlook', i: outlook(), run: true, split: true }, { n: 'Folder', i: explorer, run: true, split: true },
  { n: 'Notepad++', i: npp, run: true }, { n: 'Brady ETRM', i: brady, run: true, active: true },
];

/* ------------------------------------------------------------------ */
/* Left monitor                                                        */
/* ------------------------------------------------------------------ */

const SelectField = ({ id, label }: { id: string; label: string }) => (
  <Field $w={156}>
    <label htmlFor={id}>{label}</label>
    <select id={id}><option>{'<All>'}</option></select>
    <FieldMark><Chevron d="down" s={8} sw={1.5} /></FieldMark>
  </Field>
);
const DateField = ({ id, label }: { id: string; label: string }) => (
  <Field $w={121}>
    <label htmlFor={id}>{label}</label>
    <input id={id} defaultValue="02/11/2017" />
    <FieldMark><CalIcon /></FieldMark>
  </Field>
);

const CurveMonitor = () => (
  <CurveWindow>
    <CurveTitle>
      <span>Curve Server Monitor</span>
      <RedClose aria-label="Close"><XIcon c="#fff" s={9} sw={2.6} /></RedClose>
    </CurveTitle>
    <CurveTools>
      <button><GridIcon />Add</button>
      <button><GridIcon many />Add Multiple</button>
      <button><ReloadDoc />Refresh</button>
    </CurveTools>
    <CurveBody>
      <Filters>
        <SelectField id="commodity" label="Commodity:" />
        <SelectField id="area" label="Reference Area:" />
        <SelectField id="period" label="Period:" />
        <DateField id="from" label="From:" />
        <DateField id="to" label="To:" />
      </Filters>
      <CurveGridWrap>
        <CurveGrid>
          <colgroup>{curveCols.map(([n, w]) => <col key={n} width={w} />)}</colgroup>
          <thead>
            <tr>
              {curveCols.map(([n], i) => (
                <th key={n}>{i === 0 ? <SortHead>{n}<Svg w={8} h={5}><path d="M0 5h8L4 0z" fill="#bbb" /></Svg></SortHead> : n}</th>
              ))}
            </tr>
          </thead>
          <tbody>
            {curveRows.map(([date, pub, ...rest], i) => (
              <CurveRow key={i} $on={i === 4}>
                <td>{date}</td><td>Electricity</td><td>Curve</td>
                <td><Tick type="checkbox" defaultChecked={pub} aria-label={`Published ${date}`} /></td>
                {rest.map((c, j) => <td key={j}>{c}</td>)}
              </CurveRow>
            ))}
          </tbody>
        </CurveGrid>
      </CurveGridWrap>
      <HScroll><Chevron d="left" /><Thumb /><span /><Chevron d="right" /></HScroll>
    </CurveBody>
  </CurveWindow>
);

const LeftMonitor = () => (
  <Monitor>
    <TitleBar>
      <BradyIcon />
      <span>Brady Energy Trading and Risk Management 2017.2.2.2</span>
      <Controls $gap={35}>
        <button aria-label="Minimise"><Svg w={10} h={10}><path d="M0 5.500h10" stroke="#888" /></Svg></button>
        <button aria-label="Restore"><Svg w={10} h={10}><path d="M.5 2.500h7v7h-7zM2.500 2.500v-2h7v7h-2" stroke="#888" /></Svg></button>
        <button aria-label="Close"><XIcon c="#888" /></button>
      </Controls>
    </TitleBar>
    <MenuBar>
      {['Home', 'Contracts', 'Curves', 'Market Data', 'Reporting', 'Configuration', 'Window', 'Help'].map(m => <button key={m}>{m}</button>)}
    </MenuBar>
    <Mdi>
      <Pointer><Svg w={13} h={19}><path d="M.5.5v15l3.500-3 2.500 5.500 2-1L6 11.500h5z" fill="#fff" stroke="#000" /></Svg></Pointer>
      <CurveMonitor />
    </Mdi>
    <AppStatus>
      <StatusCell>Connected to ETRM server</StatusCell>
      <StatusCell>TEST Environment 17.2</StatusCell>
      <StatusCell><UserIcon />Vizard</StatusCell>
      <Scope>
        <Svg w={67} h={20}>
          <path d="M0 0h67v20H0z" fill="#000" />
          <path d="M3 10.500h61M9.500 3v14M34.500 3v14M59.500 3v14" stroke="#0a7a0a" />
        </Svg>
      </Scope>
    </AppStatus>
    <TaskBar>
      <TaskButton $w={48} aria-label="Start">{winLogo}</TaskButton>
      <TaskButton $w={48} aria-label="Search">{search}</TaskButton>
      <TaskButton $w={49} aria-label="Task View">{taskView}</TaskButton>
      {tasks.map(t => (
        <TaskButton key={t.n} aria-label={t.n} $run={t.run} $split={t.split} $active={t.active}>{t.i}</TaskButton>
      ))}
      <Tray>
        <TrayText>EN</TrayText>
        <TrayMore aria-label="Show hidden icons"><Chevron c="#fff" s={12} sw={1} /></TrayMore>
        <Svg><path d="M2 1h11v14H2z" fill="#444" stroke="#888" /><path d="M2 12h11v3H2z" fill="#5ab4e8" /></Svg>
        {outlook(16)}
        <Svg><path d="M2 1h12v8c0 4-4 6-6 6.500C6 15 2 13 2 9z" fill="#2b6cb0" stroke="#fff" /><path d="M10.500 4H6v3.500h4V11H5.500" stroke="#fff" strokeWidth="1.500" /></Svg>
        {skype(16)}
        <Svg><path d="M5 1h9l-1 11H6z" fill="#2b62c9" /><path d="M7 3l5 6M6 6l5 5M9 2l4 5" stroke="#7db0f0" /><circle cx="4" cy="12" r="2.500" stroke="#f0dc3a" strokeWidth="2" /><path d="M6 12h7v3" stroke="#f0dc3a" strokeWidth="2" /></Svg>
        <Svg><path d="M4.500 3.500h11v8h-11zM10 12v3M7 15h6M.5 1.500h4v5h-4zM2.500 6v8.500H7" stroke="#fff" /></Svg>
        <Svg><path d="M.5 5.500h3l4-4v13l-4-4h-3z" stroke="#fff" /><path d="M10 5.500q2 2.500 0 5" stroke="#fff" /><path d="M12 3.500q3.500 4.500 0 9M14 2q4 6 0 12" stroke="#777" /></Svg>
        <Svg><path d="M0 1h16v12H9.500L8 15.500 6.500 13H0z" fill="#fff" /><path d="M3 4.500h10M3 7h10M3 9.500h10" stroke="#101010" /></Svg>
        <Clock>08:20<br />02/11/2017</Clock>
        <PeekLine />
      </Tray>
    </TaskBar>
    <Recorder>
      <RecBox>
        <RecLogo><Svg s={32} box="0 0 24 24">{tcMark}</Svg></RecLogo>
        <RecButtons>
          <button aria-label="Pause"><Svg w={8} h={8}><path d="M0 0h3v8H0zM5 0h3v8H5z" fill="#555" /></Svg></button>
          <button aria-label="Stop"><Svg w={8} h={8}><path d="M0 0h8v8H0z" fill="#555" /></Svg></button>
        </RecButtons>
      </RecBox>
      <RecTip>
        <TipTail><Svg w={8} h={8}><path d="M0 8l7-7v7" fill="#fff" stroke="#777" /></Svg></TipTail>
        <p>Waiting for the gridLoadedPriceBooks object.</p>
        <Progress role="progressbar" aria-label="Progress" />
        <p>EditRepublishPriceBooks</p>
      </RecTip>
    </Recorder>
  </Monitor>
);

/* ------------------------------------------------------------------ */
/* Royal TS                                                            */
/* ------------------------------------------------------------------ */

const BigBtn = ({ w, art, a, b, caret }: { w: number; art: React.ReactNode; a: string; b?: string; caret?: boolean }) => (
  <Big $w={w}><BigArt>{art}</BigArt><span>{a}</span>{(b || caret) && <Inline>{b}{caret && <Caret />}</Inline>}</Big>
);
const SmallBtn = ({ art, t, off, caret }: { art: React.ReactNode; t: string; off?: boolean; caret?: boolean }) => (
  <Small $off={off}>{art}{t}{caret && <Caret c={off ? '#b5b5b5' : '#666'} />}</Small>
);

const RibbonBar = () => (
  <Ribbon>
    <Group $w={178} $pad={3}>
      <div>
        <BigBtn w={45} art={<NewIcon />} a="New" />
        <BigBtn w={45} art={<OpenBigIcon />} a="Open" />
        <Rule $m="1px 9px 0 2px" />
        <SmallCol>
          <SmallBtn art={<FolderIcon />} t="Close" /><SmallBtn art={<SaveIcon />} t="Save" /><SmallBtn art={<SaveIcon all />} t="Save All" />
        </SmallCol>
      </div>
      <p>File</p>
    </Group>
    <Group $w={140} $pad={1}>
      <div>
        <BigBtn w={53} art={<PlusBig />} a="Add" caret />
        <SmallCol>
          <SmallBtn art={<EditDocIcon />} t="Properties" /><SmallBtn art={<DuplicateIcon />} t="Duplicate" /><SmallBtn art={<DeleteIcon />} t="Delete" />
        </SmallCol>
      </div>
      <p>Edit</p>
    </Group>
    <Group $w={151} $pad={10}>
      <div>
        <SmallCol $w={90}>
          <SmallBtn art={<ArrowV />} t="Move Up" /><SmallBtn art={<ArrowV down />} t="Move Down" /><SmallBtn art={<MoveToIcon />} t="Move to..." />
        </SmallCol>
        <BigBtn w={48} art={<SortBig />} a="Sort" caret />
      </div>
      <p>Sort</p>
    </Group>
    <Group $w={282} $pad={10}>
      <div>
        <SmallCol $w={89}>
          <SmallBtn art={<PlayIcon />} t="Connect" /><SmallBtn art={<StopIcon />} t="Disconnect" off /><SmallBtn art={<ReconnectIcon />} t="Reconnect" off />
        </SmallCol>
        <Rule $m="0 9px 0 0" />
        <SmallCol>
          <SmallBtn art={<TemplateIcon />} t="Connect using Template" off caret /><SmallBtn art={<HammerIcon on />} t="Connect with Options" caret /><SmallBtn art={<HammerIcon />} t="Change" off caret />
        </SmallCol>
      </div>
      <p>Actions</p>
    </Group>
    <Group $w={230} $pad={10}>
      <AdHoc><input aria-label="Ad hoc host" /><button aria-label="Connect ad hoc"><RdpIcon c="#222" f="#fff" /><Caret /></button></AdHoc>
      <p>Ad Hoc</p>
    </Group>
    <Group $w={241} $pad={5}>
      <div>
        <BigBtn w={74} art={<ClipIcon />} a="Copy to" b="Clipboard" caret />
        <BigBtn w={89} art={<KeySeqIcon />} a="Key Sequence" b="Tasks" caret />
        <BigBtn w={66} art={<CmdTaskIcon />} a="Command" b="Tasks" caret />
      </div>
      <p>Clipboard and Favorite Tasks</p>
    </Group>
    <Group $w={252} $pad={2}>
      <div>
        <BigBtn w={74} art={<CompassIcon />} a="Navigation" />
        <BigBtn w={66} art={<GaugeIcon />} a="Dashboard" />
        <BigBtn w={50} art={<NewsIcon />} a="News" />
        <BigBtn w={54} art={<PanelsIcon />} a="Other" b="Panels" caret />
      </div>
      <p>Panels</p>
    </Group>
    <Collapse aria-label="Collapse ribbon"><Chevron /></Collapse>
  </Ribbon>
);

const Royal = () => (
  <RoyalWindow>
    <Head>
      <AppTitle>MyRDP - NETVS-QA171A02 - Royal TS</AppTitle>
      <Quick><RoyalIcon /><SaveIcon /><EditDocIcon /><QuickCaret /></Quick>
      <Context><span>Remote Desktop Connection</span><button>ACTIONS</button></Context>
      <WinButtons>
        <button aria-label="Ribbon options"><Svg w={13} h={12}><path d="M.5.5h12v11H.5zM.5 3h12M6.500 10V5M4.500 7l2-2 2 2" stroke="#b5b5b5" /></Svg></button>
        <button aria-label="Minimise"><Svg w={10} h={12}><path d="M1 8h8" stroke="#b5b5b5" strokeWidth="2" /></Svg></button>
        <button aria-label="Maximise"><Svg w={12} h={12}><path d="M1.500 1.500h9v9h-9z" stroke="#b5b5b5" /><path d="M1 1h10v3H1z" fill="#b5b5b5" /></Svg></button>
        <button aria-label="Close"><XIcon c="#b5b5b5" s={12} sw={2} /></button>
      </WinButtons>
      <Tabs>
        <Tab $kind="file">FILE</Tab><Tab $kind="on">HOME</Tab>
        <Tab>EDIT</Tab><Tab>TEMPLATES</Tab><Tab>DATA</Tab><Tab>VIEW</Tab><Tab>HELP</Tab>
      </Tabs>
      <HelpSlot aria-label="Help"><HelpIcon /></HelpSlot>
    </Head>
    <RibbonBar />
    <Work>
      <NavPanel>
        <NavHead>
          <CompassIcon s={16} /><h2>Navigation</h2>
          <Controls $gap={11}>
            <button aria-label="Pin"><PinIcon /></button>
            <button aria-label="Close panel"><XIcon s={9} sw={1.8} c="#666" /></button>
          </Controls>
        </NavHead>
        <NavSearch>
          <SearchBox $w={209}><input placeholder="Enter text to search..." aria-label="Search tree" /><MagIcon /></SearchBox>
          <BulbIcon lit /><BulbIcon />
        </NavSearch>
        <NavBody>
          <Tree>
            {tree.map((n, i) => typeof n === 'string' ? (
              <Node key={i} $leaf><RdpIcon f="#ececec" /><NodeText $on={i === 16}>{n}</NodeText></Node>
            ) : (
              <Node key={i}>
                <Svg w={7} h={8}><path d={n.shut ? 'M2 0l4 4-4 4z' : 'M7 1v6H1z'} fill="#666" /></Svg>
                <FolderIcon open={!n.shut} /><NodeText>{n.f}</NodeText>
              </Node>
            ))}
          </Tree>
          <VScroll><Chevron /><VThumb /><span /><Chevron d="down" /></VScroll>
        </NavBody>
      </NavPanel>
      <Docs>
        <DocTabs>
          <DocTab $on><GaugeIcon s={16} />Dashboard<XIcon c="#fff" s={9} sw={1.6} /></DocTab>
          <DocTab><HelpIcon />Getting Started</DocTab>
          <DocCaret aria-label="Tab list"><Caret s={8} /></DocCaret>
        </DocTabs>
        <DocBody>
          <DocHead>
            <h3><TermIcon on />Terminal Sessions:&nbsp; NETVS-QA171A02</h3>
            <span>3 Terminal Session(s)</span><ActiveCount>1 Active</ActiveCount>
            <NoteIcon /><KillIcon /><UndoIcon />
            <SearchBox $w={200}><input placeholder="Enter text to search..." aria-label="Search sessions" /><MagIcon /></SearchBox>
            <RefreshIcon />
            <Inline><GearIcon /><Caret c="#333" s={6} /></Inline>
          </DocHead>
          <Session>
            <colgroup>{sessionCols.map(([n, w]) => <col key={n} width={w} />)}<col /></colgroup>
            <thead><tr>{sessionCols.map(([n]) => <th key={n}>{n}</th>)}<th aria-label="Filler" /></tr></thead>
            <tbody>
              {sessions.map((r, i) => (
                <SessionRow key={i} $on={i === 0}>
                  {r.map((c, j) => <td key={j}>{j === 0 ? <IconCell><TermIcon on={i === 2} />{c}</IconCell> : c}</td>)}
                  <td />
                </SessionRow>
              ))}
            </tbody>
          </Session>
        </DocBody>
      </Docs>
    </Work>
    <RoyalStatus>
      <InfoIcon /><span>14:54:21 NETVS-QA171A02 disconnected.</span>
      <StatusRight>
        <BulbIcon lit /><span>0 of 83</span>
        <Svg w={13} h={15}><rect width="13" height="15" rx="2" fill="#fff" /><path d="M3 3h7v6l1 4-3-1.500v-1H5v1L2 13l1-4z" fill="#cf4528" /></Svg>
        <span>Standard License</span>
      </StatusRight>
      <Svg w={10} h={10}><path d="M7 1h2v2H7zM7 4h2v2H7zM4 4h2v2H4zM7 7h2v2H7zM4 7h2v2H4zM1 7h2v2H1z" fill="#d9c7ad" /></Svg>
    </RoyalStatus>
  </RoyalWindow>
);

export default function App() {
  return (
    <>
      <Global />
      <Desk>
        <LeftMonitor />
        <Wallpaper>
          <Sticky>
            <p>71</p><p>72</p>
            <NoteGrip><Svg w={9} h={9}><path d="M7 0h1v1H7zM7 3h1v1H7zM4 3h1v1H4zM7 6h1v1H7zM4 6h1v1H4zM1 6h1v1H1z" fill="#8f8a50" /></Svg></NoteGrip>
          </Sticky>
          <Royal />
        </Wallpaper>
      </Desk>
    </>
  );
}
